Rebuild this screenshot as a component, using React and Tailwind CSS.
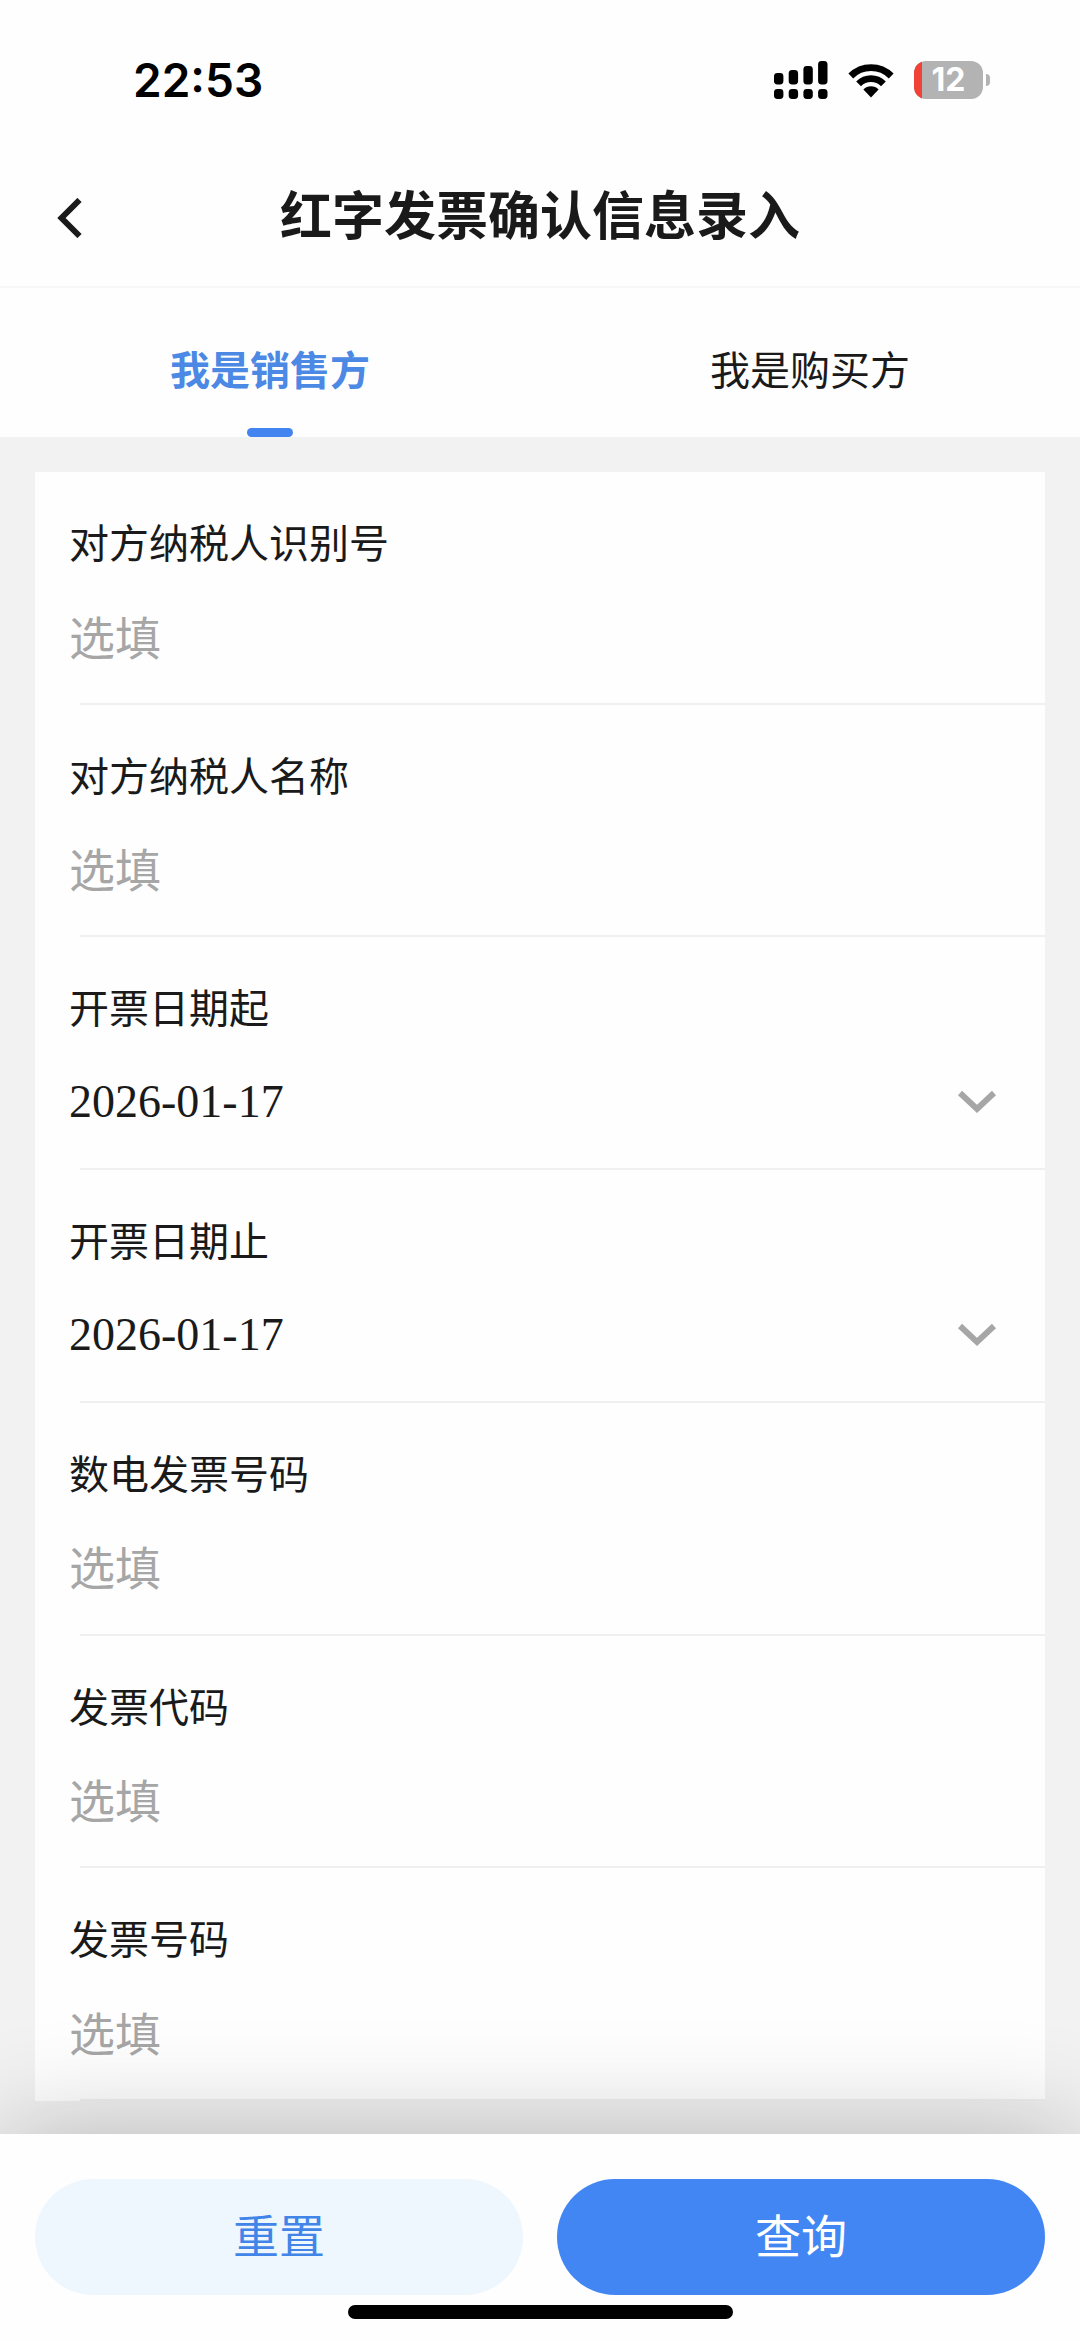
import { useState } from "react"

const TABS = ["我是销售方", "我是购买方"]

const FIELDS = [
  { id: "taxNo", label: "对方纳税人识别号" },
  { id: "taxName", label: "对方纳税人名称" },
  { id: "dateFrom", label: "开票日期起", date: "2026-01-17" },
  { id: "dateTo", label: "开票日期止", date: "2026-01-17" },
  { id: "einvoiceNo", label: "数电发票号码" },
  { id: "invoiceCode", label: "发票代码" },
  { id: "invoiceNo", label: "发票号码" },
]

function SignalIcon() {
  const tops = [12, 9, 5, 0]
  return (
    <svg className="w-[54px] h-[38px]" viewBox="0 0 54 38" aria-hidden="true">
      {tops.map((top, i) => (
        <g key={top}>
          <rect x={i * 14.7} y={top} width="9.4" height={23.5 - top} rx="3.4" />
          <rect x={i * 14.7} y="28" width="9.4" height="10" rx="3.4" />
        </g>
      ))}
    </svg>
  )
}

function WifiIcon() {
  return (
    <svg className="w-[46px] h-[36px]" viewBox="0 0 46 36" fill="none" stroke="black" aria-hidden="true">
      <path d="M2.8 14a28.6 28.6 0 0 1 40.4 0" strokeWidth="6.8" />
      <path d="M10.6 21.8a17.6 17.6 0 0 1 24.8 0" strokeWidth="6.8" />
      <path d="M23 35.5l-7.6-8a10.6 10.6 0 0 1 15.2 0z" fill="black" stroke="none" />
    </svg>
  )
}

function Battery({ level }) {
  return (
    <div className="flex items-center gap-[3px]">
      <div className="relative flex items-center justify-center w-[69px] h-[38px] rounded-[12px] overflow-hidden bg-[#b3b3b3]">
        <span className="absolute left-0 inset-y-0 bg-[#f04236]" style={{ width: `${level}%` }} />
        <span className="relative text-[32px] leading-none font-bold text-white">{level}</span>
      </div>
      <span className="w-[4px] h-[12px] rounded-r-full bg-[#b3b3b3]" />
    </div>
  )
}

function StatusBar() {
  return (
    <div className="flex items-center justify-between h-[144px] pt-[16px] pl-[133px] pr-[90px] font-['Inter',sans-serif] text-black">
      <span className="text-[46px] leading-none font-semibold">22:53</span>
      <div className="flex items-center gap-[20px]">
        <SignalIcon />
        <WifiIcon />
        <Battery level={12} />
      </div>
    </div>
  )
}

function Field({ id, label, date }) {
  return (
    <div className="flex-1 flex flex-col">
      <div className="flex-1 flex flex-col px-[34px] pt-[39px]">
        <label htmlFor={id} className="text-[40px] leading-[60px] text-[#1a1a1a]">
          {label}
        </label>
        {date ? (
          <button id={id} type="button" className="flex items-center justify-between h-[68px] mt-[30px] pt-[4px] pr-[15px] text-left">
            <span className="text-[46px] leading-none text-[#1a1a1a] font-['Liberation_Serif',serif]">{date}</span>
            <svg className="w-[38px] h-[24px]" viewBox="0 0 38 24" fill="none" stroke="#a6a6a6" strokeWidth="6" aria-hidden="true">
              <path d="M2 3l17 16 17-16" />
            </svg>
          </button>
        ) : (
          <input
            id={id}
            type="text"
            placeholder="选填"
            className="h-[68px] mt-[30px] w-full text-[46px] text-[#1a1a1a] placeholder:text-[#a6a6a6] outline-none"
          />
        )}
      </div>
      <div className="ml-[45px] h-[2px] bg-[#f0f0f0]" />
    </div>
  )
}

export default function App() {
  const [activeTab, setActiveTab] = useState(0)

  return (
    <div className="min-h-screen flex flex-col bg-[#f2f2f2] font-['Noto_Sans_CJK_SC',sans-serif]">
      <header className="bg-[#fefefe]">
        <StatusBar />

        {/* Title */}
        <div className="grid grid-cols-[1fr_auto_1fr] items-center h-[144px] px-[57px] border-b-2 border-[#f7f7f7]">
          <button type="button" aria-label="返回" className="justify-self-start pt-[6px]">
            <svg className="w-[25px] h-[40px]" viewBox="0 0 25 40" fill="none" stroke="#1a1a1a" strokeWidth="6" aria-hidden="true">
              <path d="M22.5 2L4.5 20l18 18" />
            </svg>
          </button>
          <h1 className="pb-[4px] text-[52px] leading-none font-bold text-[#1a1a1a]">红字发票确认信息录入</h1>
        </div>

        {/* Tabs */}
        <div role="tablist" className="grid grid-cols-2 h-[149px]">
          {TABS.map((tab, index) => (
            <button
              key={tab}
              type="button"
              role="tab"
              aria-selected={activeTab === index}
              onClick={() => setActiveTab(index)}
              className={`flex flex-col items-center pt-[50px] text-[40px] leading-[60px] ${
                activeTab === index ? "font-bold text-[#4b89e4]" : "text-[#1a1a1a]"
              }`}
            >
              {tab}
              {activeTab === index && <span className="mt-auto w-[46px] h-[9px] rounded-full bg-[#4285f0]" />}
            </button>
          ))}
        </div>
      </header>

      {/* Form */}
      <main className="flex-1 flex flex-col px-[35px] pt-[35px] pb-[33px]">
        <form className="flex-1 flex flex-col bg-[#fefefe]">
          {FIELDS.map((field) => (
            <Field key={field.id} {...field} />
          ))}
        </form>
      </main>

      {/* Actions */}
      <footer className="relative bg-[#fefefe] px-[35px] pt-[45px] pb-[22px] shadow-[0_0_110px_rgba(0,0,0,0.26)]">
        <div className="grid grid-cols-2 gap-[34px]">
          <button type="button" className="h-[116px] pb-[8px] rounded-full bg-[#eef7fe] text-[46px] text-[#4285e8]">
            重置
          </button>
          <button type="button" className="h-[116px] pb-[8px] rounded-full bg-[#4286f3] text-[46px] text-white">
            查询
          </button>
        </div>
        <div className="mx-auto mt-[10px] w-[385px] h-[14px] rounded-full bg-black" />
      </footer>
    </div>
  )
}
